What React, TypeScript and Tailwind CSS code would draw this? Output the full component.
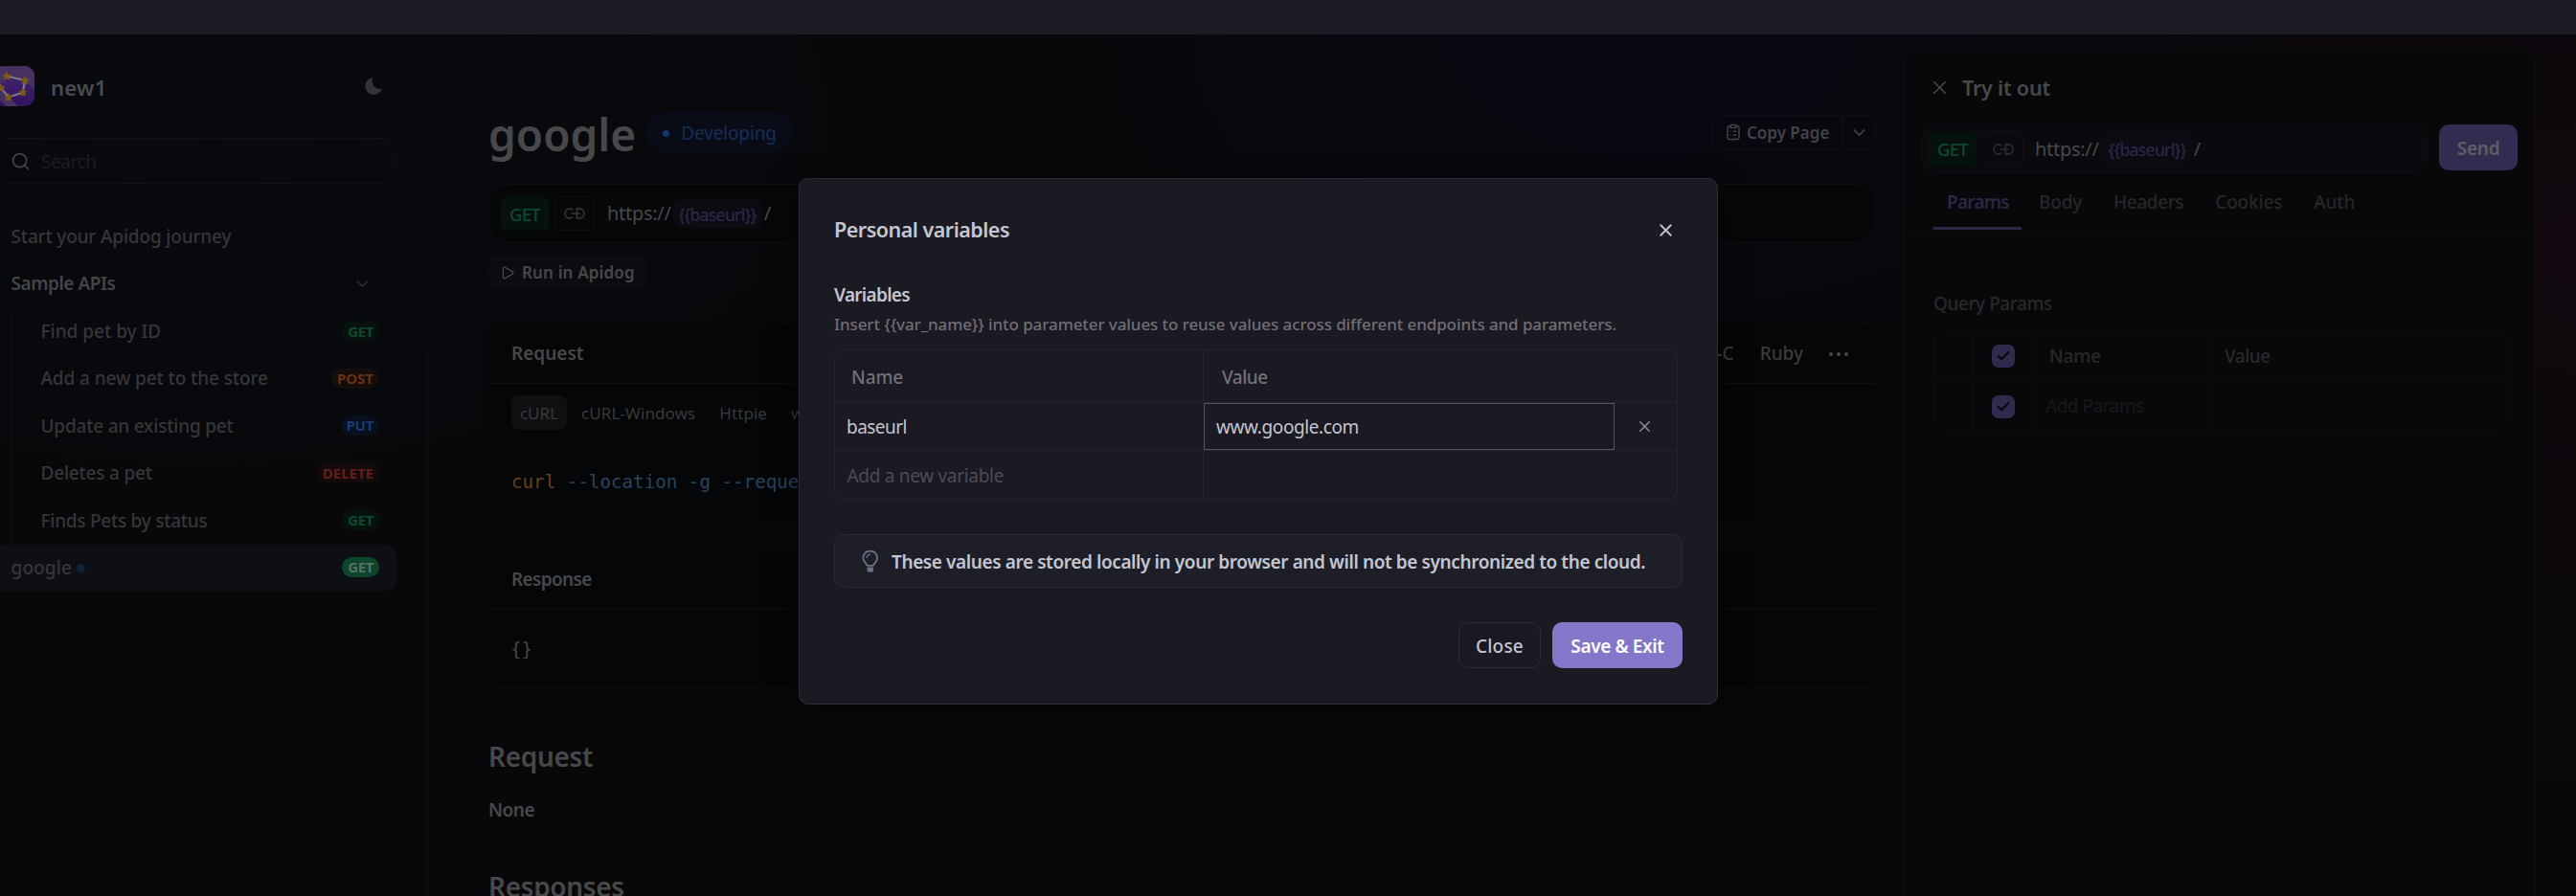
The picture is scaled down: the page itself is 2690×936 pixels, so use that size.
import React from "react";
import { Check, ChevronDown, ClipboardList, Play, Search, X } from "lucide-react";
import { clsx } from "clsx";

interface NavItem {
  label: string;
  method: string;
  badge: string;
  tracking: string;
}

const navItems: NavItem[] = [
  { label: "Find pet by ID", method: "GET", badge: "bg-[#07120f] text-[#10482c] tracking-[-0.4px]", tracking: "" },
  { label: "Add a new pet to the store", method: "POST", badge: "bg-[#130d0b] text-[#6b3113]", tracking: "tracking-[-0.1px]" },
  { label: "Update an existing pet", method: "PUT", badge: "bg-[#08101f] text-[#193c70] tracking-[-0.3px]", tracking: "tracking-[-0.2px]" },
  { label: "Deletes a pet", method: "DELETE", badge: "bg-[#140a0c] text-[#611f1b]", tracking: "tracking-[-0.2px]" },
  { label: "Finds Pets by status", method: "GET", badge: "bg-[#07120f] text-[#10482c] tracking-[-0.4px]", tracking: "tracking-[-0.26px]" },
];

const Logo = () => (
  <svg width="42" height="42" viewBox="0 0 42 42" className="shrink-0">
    <defs>
      <linearGradient id="logo-bg" x1="0" y1="0" x2="0" y2="1">
        <stop offset="0" stopColor="#473265" />
        <stop offset="0.5" stopColor="#3b1d69" />
        <stop offset="1" stopColor="#33125f" />
      </linearGradient>
      <clipPath id="logo-clip">
        <rect width="42" height="42" rx="10" />
      </clipPath>
    </defs>
    <g clipPath="url(#logo-clip)">
      <rect width="42" height="42" fill="url(#logo-bg)" />
      <path d="M13 10 32 15 42 24V0H0V24L6 21Z" fill="#47325f" />
      <path d="M6 23 25 42H13L0 30V18Z" fill="#47325f" />
      <path d="M13 10.5 32 15 30 27.5 15 32.5 7 23" fill="none" stroke="#7d7884" strokeWidth="2.2" />
      {[[13, 10.5], [32, 15], [30, 27.5], [15, 32.5], [7, 23]].map(([x, y]) => (
        <path
          key={x}
          transform={`translate(${x} ${y})`}
          d="M0-3.8 1.1-1.3 3.8-1 1.8.8 2.4 3.5 0 2.1-2.4 3.5-1.8.8-3.8-1-1.1-1.3Z"
          fill="#7d5b14"
          stroke="#7d5b14"
          strokeLinejoin="round"
        />
      ))}
    </g>
  </svg>
);

const Moon = () => (
  <svg width="18" height="18" viewBox="0 0 18 18" className="text-[#333438]">
    <path d="M8.3 0A9 9 0 1 0 18 11.6 8.3 8.3 0 0 1 8.3 0Z" fill="currentColor" />
  </svg>
);

const LinkIcon = () => (
  <svg width="22" height="12" viewBox="0 0 22 12" fill="none" stroke="currentColor" strokeWidth="1.8">
    <path d="M9 2.6C8.3 1.5 7.3 1 6 1a5 5 0 0 0 0 10c1.3 0 2.3-.5 3-1.6" />
    <path d="M13.4 1H16a5 5 0 0 1 0 10h-2.6Z" />
    <path d="M7.4 6h9.2" />
  </svg>
);

const Bulb = () => (
  <svg width="18" height="23" viewBox="0 0 18 23" fill="none" stroke="#697083" strokeWidth="1.8">
    <path d="M5.6 15.8C5 13.6 1.3 12 1.3 7.9a7.4 7.4 0 0 1 14.8 0c0 4.1-3.5 5.7-4.1 7.9Z" strokeLinejoin="round" />
    <path d="M4.9 8A3.8 3.8 0 0 1 8.7 4.3" strokeWidth="1.4" />
    <path d="M5.6 17.4h6.4V21a1.6 1.6 0 0 1-1.6 1.6H7.2A1.6 1.6 0 0 1 5.6 21Z" fill="#697083" stroke="none" />
  </svg>
);

const MethodTag = () => (
  <span className="flex h-9 w-[50px] items-center justify-center rounded-[5px] bg-[#06110e] pt-px text-[18.5px] font-medium tracking-[-0.7px] text-[#0e492b]">
    GET
  </span>
);

const UrlVariable = () => (
  <span className="flex h-[29px] items-center justify-center rounded-[8px] bg-[#0c0b11] pt-0.5 text-[17.5px] font-medium tracking-[-0.75px] text-[#2b2649]">
    <span className="px-1.5">{"{{baseurl}}"}</span>
  </span>
);

const Sidebar = () => (
  <aside className="w-[447px] shrink-0 border-r border-[#0e0f13] pt-[33px]">
    <div className="-ml-2 w-[422px]">
      <div className="flex h-[42px] items-center pr-[15px] pl-0.5">
        <Logo />
        <span className="pt-[3px] pl-[17px] text-[22px] font-semibold tracking-[0.3px] text-[#4a4b50]">new1</span>
        <span className="ml-auto">
          <Moon />
        </span>
      </div>
      <div className="mt-[33px] flex h-12 items-center rounded-[14px] border border-[#0f1115] pl-[18px]">
        <Search className="h-[21px] w-[21px] text-[#414246]" strokeWidth={2} />
        <span className="pt-0.5 pl-[11px] text-[19px] tracking-[-0.45px] text-[#1c1e22]">Search</span>
      </div>

      <nav className="mt-[31px] flex flex-col gap-[1.4px] text-[19px] font-medium text-[#353639]">
        <div className="flex h-12 items-center pt-px pl-[19.5px] tracking-[-0.17px]">Start your Apidog journey</div>
        <div className="flex h-12 items-center justify-between pr-[25px] pl-[19.5px]">
          <span className="font-semibold tracking-[-0.45px] text-[#434448]">Sample APIs</span>
          <ChevronDown className="h-[21px] w-[21px] text-[#2a2b2f]" />
        </div>
        <div className="ml-[20px] flex flex-col gap-[1.4px] border-l border-[#0e0f13]">
          {navItems.map((item) => (
            <div key={item.label} className="flex h-12 items-center justify-between pr-[18px] pl-[29.5px]">
              <span className={clsx("pt-px", item.tracking)}>{item.label}</span>
              <span className={clsx("flex h-[21px] items-center rounded-full px-[6px] text-[15px] font-bold", item.badge)}>
                {item.method}
              </span>
            </div>
          ))}
        </div>
        <div className="flex h-12 items-center rounded-[10px] bg-[#0e0f15] pr-[18px] pl-[19.5px]">
          <span className="pt-0.5 tracking-[0.1px]">google</span>
          <span className="mt-0.5 ml-[5px] h-[9px] w-[9px] rounded-full bg-[#102139]" />
          <span className="ml-auto flex h-[21px] items-center rounded-full bg-[#0c4529] px-[6px] text-[15px] font-bold tracking-[-0.4px] text-[#5c6d64]">
            GET
          </span>
        </div>
      </nav>
    </div>
  </aside>
);

const Content = () => (
  <main className="w-[1541px] shrink-0 pt-[72px] pr-[29px] pl-[63px] text-[19px] text-[#47484a]">
    <div className="flex h-[60px] items-center">
      <h1 className="pt-1 text-[46px] leading-none font-semibold">google</h1>
      <span className="ml-[10px] flex h-[42px] items-center rounded-full bg-[#090c17] pt-0.5 pr-[18px] pl-[18px] tracking-[-0.15px] text-[#152e57]">
        <span className="mr-3 h-[7px] w-[7px] rounded-full bg-[#16376b]" />
        Developing
      </span>
      <div className="ml-auto flex h-9 w-[171px] items-center rounded-[8px] border border-[#100f15] text-[#434347]">
        <ClipboardList className="ml-[12px] h-[18px] w-[18px]" strokeWidth={1.9} />
        <span className="pt-0.5 pl-[5px] text-[17px] font-semibold">Copy Page</span>
        <span className="ml-auto flex h-full w-[34px] items-center justify-center border-l border-[#100f15]">
          <ChevronDown className="h-[21px] w-[21px]" strokeWidth={1.9} />
        </span>
      </div>
    </div>

    <div className="mt-[24px] flex h-[62px] items-center rounded-[20px] border border-[#0e0f13] bg-[#060709] pl-3">
      <MethodTag />
      <span className="ml-1.5 flex h-9 w-[42px] items-center justify-center rounded-[6px] border border-[#0f1014] text-[#303134]">
        <LinkIcon />
      </span>
      <span className="pl-[13px] text-[20px] tracking-[-0.3px]">https://</span>
      <span className="pl-0.5">
        <UrlVariable />
      </span>
      <span className="pl-[2px] text-[20px]">/</span>
    </div>
    <div className="mt-[13px] flex h-[35px] w-[165px] items-center rounded-[8px] bg-[#0c0b10]">
      <Play className="ml-[12px] h-4 w-4" strokeWidth={1.9} />
      <span className="pt-px pl-[7px] text-[17px] font-semibold tracking-[0.15px]">Run in Apidog</span>
    </div>

    <section className="mt-[35px] h-[207px] rounded-[16px] bg-[#050607]">
      <div className="flex h-16 items-center border-b border-[#0d0e10] pt-0.5 pr-[29px] pl-6">
        <span className="font-semibold">Request</span>
        <div className="ml-auto flex items-center gap-[27px] font-medium text-[#3a3b3d]">
          <span>Objective-C</span>
          <span>Ruby</span>
          <span className="flex gap-[4px] text-[#47484a]">
            <i className="h-1 w-1 rounded-full bg-current" />
            <i className="h-1 w-1 rounded-full bg-current" />
            <i className="h-1 w-1 rounded-full bg-current" />
          </span>
        </div>
      </div>
      <div className="flex items-center pt-3 pl-6 text-[17px] text-[#38393b]">
        <span className="flex h-9 w-[58px] items-center justify-center rounded-[8px] bg-[#0f1012] pt-px">cURL</span>
        <span className="pt-px pl-[15px] tracking-[0.1px]">cURL-Windows</span>
        <span className="pt-px pl-[25px] tracking-[0.05px]">Httpie</span>
        <span className="pt-px pl-[25px]">wget</span>
      </div>
      <pre className="pt-10 pl-6 font-['DejaVu_Sans_Mono',monospace] text-[19.2px] leading-[30px] text-[#27445f]">
        <span className="text-[#65411e]">curl</span> --location -g --request GET
      </pre>
    </section>

    <section className="mt-8 h-[142px] rounded-[16px] bg-[#050607]">
      <div className="flex h-[60px] items-center border-b border-[#0d0e10] pl-6 font-semibold">
        <span className="tracking-[-0.65px]">Response</span>
      </div>
      <pre className="pt-[28px] pl-[23px] font-['DejaVu_Sans_Mono',monospace] text-[19.2px] leading-[30px]">{"{}"}</pre>
    </section>

    <h2 className="mt-[52px] text-[28px] leading-10 font-semibold tracking-[-0.33px]">Request</h2>
    <p className="mt-[21px] leading-[30px] font-semibold tracking-[-0.5px]">None</p>
    <h2 className="mt-[45px] text-[28px] leading-10 font-semibold tracking-[-0.35px]">Responses</h2>
  </main>
);

const Checkbox = () => (
  <span className="flex h-6 w-6 items-center justify-center rounded-[7px] bg-[#322a4e]">
    <Check className="h-4 w-4 text-[#08080a]" strokeWidth={3.2} />
  </span>
);

const TryItOut = () => (
  <section className="mt-[15px] w-[660px] shrink-0 rounded-t-[18px] border border-b-0 border-[#0f0f13] bg-[#08080a] text-[19px] text-[#47484a]">
    <div className="flex h-[78px] items-center pl-[25px]">
      <X className="h-[23px] w-[23px]" strokeWidth={1.6} />
      <span className="pt-0.5 pl-[12px] text-[21.5px] font-semibold tracking-[-0.2px]">Try it out</span>
    </div>
    <div className="flex pl-[18px]">
      <div className="flex h-[51px] w-[528px] items-center rounded-[12px] border border-[#0e0e13] bg-[#0a0a0e] pl-1.5">
        <MethodTag />
        <span className="ml-1.5 flex h-[37px] w-[43px] items-center justify-center rounded-[6px] border border-[#0f1014] text-[#27282c]">
          <LinkIcon />
        </span>
        <span className="pt-px pl-[12px] text-[20px] tracking-[-0.3px]">https://</span>
        <span className="pl-[4px]">
          <UrlVariable />
        </span>
        <span className="pt-px pl-[2px] text-[20px]">/</span>
      </div>
      <span className="ml-3 flex h-12 w-[82px] items-center justify-center rounded-[10px] bg-[#342c50] pt-0.5 font-semibold tracking-[-0.25px] text-[#5f5e64]">
        Send
      </span>
    </div>
    <div className="flex h-[60px] border-b border-[#0d0d10] pl-[30px] font-medium text-[#262629]">
      <span className="flex h-full w-[92px] justify-center border-b-[3px] border-[#2d2745] pt-[16px] pl-px font-semibold tracking-[-0.75px] text-[#2d2745]">
        Params
      </span>
      <span className="pt-[16px] pl-[18px] tracking-[-0.2px]">Body</span>
      <span className="pt-[16px] pl-[33px] tracking-[-0.4px]">Headers</span>
      <span className="pt-[16px] pl-[33px] tracking-[-0.15px]">Cookies</span>
      <span className="pt-[16px] pl-[33px] tracking-[-0.2px]">Auth</span>
    </div>
    <div className="pt-[61px] pl-[30px] leading-[30px] font-medium tracking-[-0.43px] text-[#28282b]">Query Params</div>
    <div className="mt-3 ml-[30px] grid w-[598px] grid-cols-[41px_62px_182px_1fr] grid-rows-[55px_49px] overflow-hidden rounded-[10px] border border-[#0d0d10] text-[#28282b]">
      <span className="border-r border-b border-[#0d0d10]" />
      <span className="flex items-center justify-center border-r border-b border-[#0d0d10]">
        <Checkbox />
      </span>
      <span className="flex items-center border-r border-b border-[#0d0d10] pt-px pl-[17px] font-medium tracking-[-0.2px]">Name</span>
      <span className="flex items-center border-b border-[#0d0d10] pt-px pl-[18px] font-medium tracking-[-0.5px]">Value</span>
      <span className="border-r border-[#0d0d10]" />
      <span className="flex items-center justify-center border-r border-[#0d0d10]">
        <Checkbox />
      </span>
      <span className="flex items-center border-r border-[#0d0d10] pl-[13px] tracking-[-0.5px] text-[#18181d]">Add Params</span>
      <span />
    </div>
  </section>
);

const VariablesDialog = () => (
  <div
    role="dialog"
    className="absolute top-[186px] left-[834px] h-[550px] w-[960px] rounded-[10px] border border-[#2d2c35] bg-[#1b1922] px-9 pt-[33px] text-[19px] text-[#c2c6d0] shadow-[0_10px_30px_rgba(0,0,0,0.5)]"
  >
    <div className="flex h-10 items-center justify-between">
      <span className="text-[21.5px] font-semibold tracking-[-0.5px]">Personal variables</span>
      <X className="mt-px mr-[7px] h-[21px] w-[21px]" strokeWidth={2.1} />
    </div>
    <div className="mt-[34px] leading-7 font-semibold tracking-[-0.7px]">Variables</div>
    <p className="mt-[3px] text-[17px] leading-7 font-medium tracking-[-0.09px] text-[#6f6e75]">
      {"Insert {{var_name}} into parameter values to reuse values across different endpoints and parameters."}
    </p>

    <div className="mt-3 grid h-[157px] w-[881px] grid-cols-[385px_430px_1fr] grid-rows-[55px_50px_1fr] rounded-[10px] border border-[#25242d]">
      <span className="flex items-center border-r border-b border-[#25242d] pt-0.5 pl-[17px] font-medium tracking-[-0.1px] text-[#72717a]">
        Name
      </span>
      <span className="col-span-2 flex items-center border-b border-[#25242d] pt-0.5 pl-[19px] font-medium tracking-[-0.5px] text-[#72717a]">
        Value
      </span>
      <span className="flex items-center border-b border-[#25242d] pt-0.5 pl-3 tracking-[-0.55px]">baseurl</span>
      <span className="border-b border-[#25242d]">
        <span className="flex h-full w-[429px] items-center border border-[#555460] pt-0.5 pl-3 tracking-[-0.4px]">
          www.google.com
        </span>
      </span>
      <span className="flex items-center border-b border-[#25242d] pl-[21px]">
        <X className="h-[19px] w-[19px] text-[#8b8a94]" strokeWidth={1.9} />
      </span>
      <span className="flex items-center border-r border-[#25242d] pt-0.5 pl-[12.5px] tracking-[-0.3px] text-[#4c4b56]">
        Add a new variable
      </span>
      <span className="col-span-2" />
    </div>

    <div className="mt-9 flex h-[56px] w-[886px] items-center rounded-[10px] border border-[#2a2a36] bg-[#1e1e29] pl-7">
      <Bulb />
      <span className="pt-0.5 pl-[13px] font-semibold tracking-[-0.4px]">
        These values are stored locally in your browser and will not be synchronized to the cloud.
      </span>
    </div>

    <div className="mt-9 flex justify-end gap-3">
      <button className="h-12 w-[86px] rounded-[10px] border border-[#2d2c35] pt-0.5 font-medium tracking-[0.2px]">Close</button>
      <button className="h-12 w-[136px] rounded-[10px] bg-[#8476c8] pt-0.5 font-semibold tracking-[-0.37px] text-white">
        Save &amp; Exit
      </button>
    </div>
  </div>
);

export default function App() {
  return (
    <div className="relative flex h-[936px] w-[2690px] flex-col overflow-hidden bg-[#08080a] font-['Noto_Sans',sans-serif] whitespace-nowrap">
      <div className="h-9 shrink-0 bg-[#1b1b24]" />
      <div className="flex min-h-0 flex-1 overflow-hidden bg-[radial-gradient(ellipse_700px_420px_at_64%_0%,#090812,transparent),radial-gradient(ellipse_700px_600px_at_100%_25%,#10080e,transparent),radial-gradient(ellipse_900px_500px_at_8%_10%,#080a0f,transparent)]">
        <Sidebar />
        <Content />
        <TryItOut />
      </div>
      <VariablesDialog />
    </div>
  );
}
